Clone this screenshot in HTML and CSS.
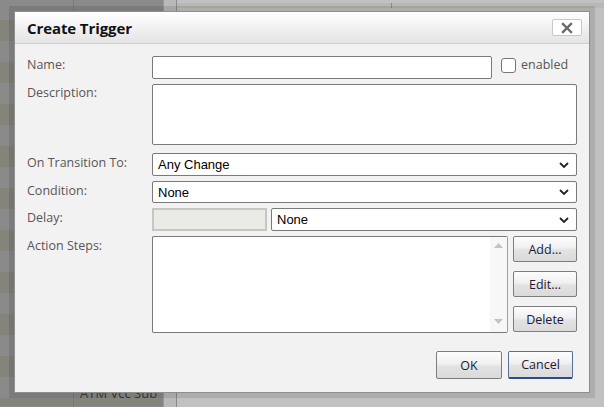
FILE: index.html
```html
<!DOCTYPE html>
<html>
<head>
<meta charset="utf-8">
<link rel="stylesheet" href="styles.css">
</head>
<body>
<div class="app">
  <div class="col col-a"></div>
  <div class="col col-b">
    <div class="bg-bottom-text">ATM Vcc Sub</div>
  </div>
  <div class="col col-c"></div>
  <div class="col col-d">
    <div class="d-top">
      <div class="d-cell d-cell-1"></div>
      <div class="d-cell d-cell-2"></div>
    </div>
  </div>
</div>

<div class="dialog">
  <div class="dlg-head">
    <div class="dlg-title">Create Trigger</div>
    <div class="dlg-close">
      <svg width="12" height="12" viewBox="0 0 12 12"><path d="M2 2 L10 10 M10 2 L2 10" stroke="#6a6a6a" stroke-width="2.4" stroke-linecap="square"/></svg>
    </div>
  </div>
  <div class="dlg-body">
    <div class="form">
      <div class="lbl">Name:</div>
      <div class="field row-name">
        <div class="input name-input"></div>
        <div class="check"></div>
        <div class="check-lbl">enabled</div>
      </div>

      <div class="lbl">Description:</div>
      <div class="field"><div class="input textarea"></div></div>

      <div class="lbl lbl-sel">On Transition To:</div>
      <div class="field"><div class="select"><span>Any Change</span><svg class="chev" width="10" height="6" viewBox="0 0 10 6"><path d="M1 1 L5 5 L9 1" fill="none" stroke="#222" stroke-width="1.8"/></svg></div></div>

      <div class="lbl lbl-sel">Condition:</div>
      <div class="field"><div class="select"><span>None</span><svg class="chev" width="10" height="6" viewBox="0 0 10 6"><path d="M1 1 L5 5 L9 1" fill="none" stroke="#222" stroke-width="1.8"/></svg></div></div>

      <div class="lbl lbl-sel">Delay:</div>
      <div class="field row-delay">
        <div class="delay-input"></div>
        <div class="select grow"><span>None</span><svg class="chev" width="10" height="6" viewBox="0 0 10 6"><path d="M1 1 L5 5 L9 1" fill="none" stroke="#222" stroke-width="1.8"/></svg></div>
      </div>

      <div class="lbl lbl-sel">Action Steps:</div>
      <div class="field row-actions">
        <div class="list">
          <div class="list-area"></div>
          <div class="scroll">
            <svg width="9" height="5" viewBox="0 0 9 5"><path d="M0 5 L4.5 0 L9 5 Z" fill="#c3c3c3"/></svg>
            <svg width="9" height="5" viewBox="0 0 9 5"><path d="M0 0 L4.5 5 L9 0 Z" fill="#c3c3c3"/></svg>
          </div>
        </div>
        <div class="side-btns">
          <div class="btn side">Add...</div>
          <div class="btn side">Edit...</div>
          <div class="btn side">Delete</div>
        </div>
      </div>
    </div>
    <div class="footer">
      <div class="btn foot">OK</div>
      <div class="btn foot primary">Cancel</div>
    </div>
  </div>
</div>
</body>
</html>
```

FILE: styles.css
```css
html, body {
  margin: 0;
  padding: 0;
}
body {
  width: 604px;
  height: 407px;
  overflow: hidden;
  position: relative;
  background: #c0c0c0;
  font-family: "Open Sans", "Liberation Sans", sans-serif;
}
.app {
  display: flex;
  height: 407px;
}
.col {
  height: 100%;
  position: relative;
  overflow: hidden;
}
.col-a {
  width: 73px;
  border-right: 1px solid #7a7a7a;
  background: repeating-linear-gradient(to bottom, #8a8a8a 0px, #8a8a8a 21px, #84847b 21px, #84847b 42px);
  background-position: 0 -1px;
}
.col-b {
  width: 89px;
  border-right: 1px solid #9a9a9a;
  background: repeating-linear-gradient(to bottom, #8a8a8a 0px, #8a8a8a 21px, #84847b 21px, #84847b 42px);
  background-position: 0 -1px;
}
.col-c {
  width: 12px;
  background: #b9b9b9;
  border-right: 1px solid #8a8a8a;
}
.col-d {
  flex: 1;
  background: #c1c1c1;
}
.d-top {
  display: flex;
  height: 5px;
  margin-top: 3px;
  background: #b8b8b0;
}
.d-cell-1 {
  width: 214px;
  border-right: 1px solid #8c8c8c;
}
.bg-bottom-text {
  position: absolute;
  left: 6px;
  top: 384px;
  font-size: 13px;
  color: #3a3a3a;
}

.dialog {
  position: absolute;
  left: 14px;
  top: 11px;
  width: 574px;
  height: 380px;
  border: 1px solid #8e8e8e;
  background: #f2f2f2;
  box-shadow: 0 0 0 5px rgba(0, 0, 0, 0.1);
  display: flex;
  flex-direction: column;
}
.dlg-head {
  height: 31px;
  border-bottom: 1px solid #cfcfcf;
  background: linear-gradient(to bottom, #ffffff, #e4e4e4);
  display: flex;
  align-items: center;
  justify-content: space-between;
  padding: 0 7px 0 12px;
}
.dlg-title {
  font-weight: bold;
  font-size: 15px;
  color: #111;
  letter-spacing: -0.1px;
}
.dlg-close {
  width: 28px;
  height: 15px;
  border: 1px solid #c8c8c8;
  border-radius: 2px;
  background: #fff;
  display: flex;
  align-items: center;
  justify-content: center;
}
.dlg-body {
  flex: 1;
  padding: 12px 12px 0 12px;
  display: flex;
  flex-direction: column;
}
.form {
  display: grid;
  grid-template-columns: 125px 1fr;
  grid-template-rows: 23px 64px 23px 22px 23px 97px;
  row-gap: 5px;
}
.lbl {
  font-size: 12.5px;
  color: #5b5555;
  padding-top: 1px;
  line-height: 16px;
}
.lbl-sel {
  padding-top: 2px;
}
.field {
  display: flex;
  min-width: 0;
}
.input {
  box-sizing: border-box;
  border: 1px solid #7a7a7a;
  border-radius: 2px;
  background: #fff;
}
.name-input {
  width: 340px;
  height: 23px;
}
.check {
  width: 15px;
  height: 15px;
  margin: 2px 0 0 9px;
  box-sizing: border-box;
  border: 1px solid #767676;
  border-radius: 3px;
  background: #fff;
}
.check-lbl {
  margin-left: 5px;
  font-size: 12.5px;
  color: #5b5555;
  line-height: 16px;
  padding-top: 1px;
}
.textarea {
  flex: 1;
  height: 61px;
}
.select {
  flex: 1;
  box-sizing: border-box;
  height: 100%;
  border: 1px solid #7a7a7a;
  border-radius: 2px;
  background: #fff;
  display: flex;
  align-items: center;
  justify-content: space-between;
  padding: 0 5px 0 5px;
  font-family: "Liberation Sans", Arial, sans-serif;
  font-size: 13px;
  color: #000;
}
.chev {
  margin-right: 2px;
}
.delay-input {
  width: 115px;
  box-sizing: border-box;
  border: 2px solid #c6c6c6;
  background: #ebebe6;
  margin-right: 4px;
}
.row-actions {
  gap: 5px;
}
.list {
  width: 356px;
  box-sizing: border-box;
  border: 1px solid #7a7a7a;
  border-right-color: #a0a0a0;
  border-radius: 2px;
  background: #fff;
  display: flex;
}
.list-area {
  flex: 1;
}
.scroll {
  width: 17px;
  background: #f7f7f7;
  display: flex;
  flex-direction: column;
  justify-content: space-between;
  align-items: center;
  padding: 6px 0 8px;
}
.side-btns {
  display: flex;
  flex-direction: column;
  gap: 9px;
}
.btn {
  box-sizing: border-box;
  border: 1px solid #7d7d7d;
  border-radius: 2px;
  background: linear-gradient(to bottom, #fdfdfd 0%, #f0f0f0 45%, #e2e2e2 55%, #dadada 100%);
  display: flex;
  align-items: center;
  justify-content: center;
  font-size: 12.5px;
  color: #1a1a3a;
}
.side {
  width: 64px;
  height: 26px;
}
.footer {
  display: flex;
  justify-content: flex-end;
  gap: 6px;
  margin-top: 18px;
  padding-right: 4px;
}
.foot {
  width: 66px;
  height: 28px;
}
.primary {
  width: 65px;
  border-color: #5a6f95;
  border-bottom: 2px solid #2e4a86;
}
```
